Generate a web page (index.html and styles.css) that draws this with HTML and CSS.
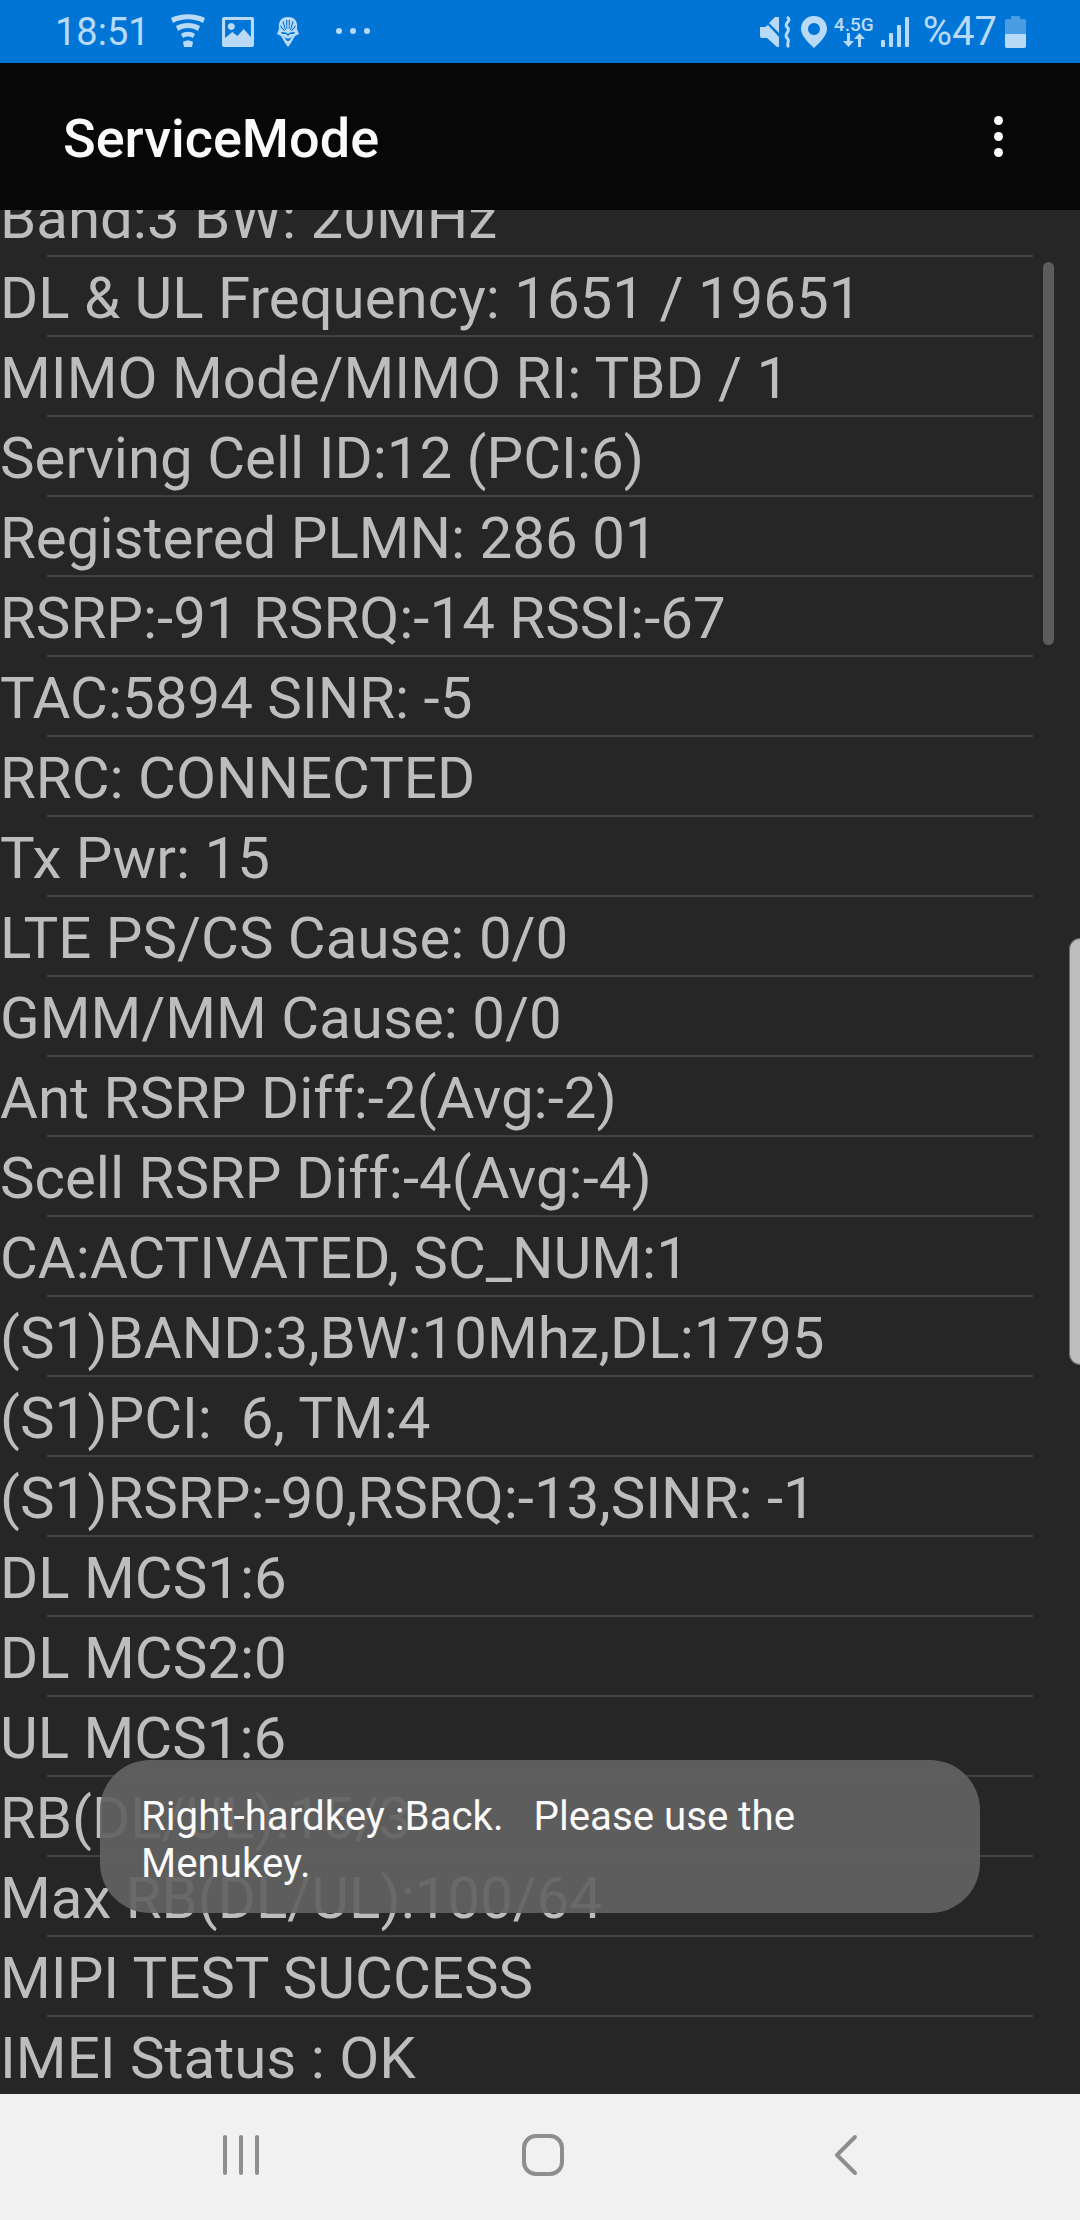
FILE: index.html
```html
<!DOCTYPE html>
<html lang="en">
<head>
    <meta charset="UTF-8">
    <title>ServiceMode</title>
    <link rel="stylesheet" href="styles.css">
</head>
<body>
    <div class="phone">
        <div class="status-bar">
            <div class="status-left">
                <span class="clock">18:51</span>
                <svg class="ic-wifi" width="34" height="36" viewBox="1 0 34 36">
                    <path d="M1 4C11 -1 25 -1 35 4L33 9C24 4 12 4 3 9Z M6 12C13 8 23 8 30 12L28 17C22 13 14 13 8 17Z M11 20C15 17 21 17 25 20L23 24C20 22 16 22 13 24Z M13 28C16 26 20 26 23 28L22 33H14Z"/>
                </svg>
                <svg class="ic-photo" width="32" height="30" viewBox="0 0 31 30" preserveAspectRatio="none">
                    <path fill-rule="evenodd" d="M2 0H29Q31 0 31 2V28Q31 30 29 30H2Q0 30 0 28V2Q0 0 2 0ZM3 3V21L10 15L15 19L21 12L28 20V3ZM9 6A3.500 3.500 0 1 0 9.010 6Z"/>
                </svg>
                <svg class="ic-mask" width="22" height="30" viewBox="0 0 22 30">
                    <path fill-rule="evenodd" d="M6 1Q11 -1 16 1Q21 4 20 12L22 17L18 19L14 26L11 30L8 26L4 19L0 17L2 12Q1 4 6 1ZM10.300 3H9L9.500 12H10.300ZM13 3H11.700V12H12.500ZM6.500 4L5.500 5L8 13L9 13ZM15.500 4L13 13L14 13L16.500 5ZM3.500 8V10L7 14L8 14ZM18.500 8L14 14L15 14L18.500 10ZM4 15L5 17H9L11 19L13 17H17L18 15L13 15.500L11 17L9 15.500ZM7 20L10 24H12L15 20L12 21.500H10Z"/>
                </svg>
                <div class="more-dots"><span></span><span></span><span></span></div>
            </div>
            <div class="status-right">
                <svg class="ic-mute" width="32" height="32" viewBox="0 0 32 32">
                    <path d="M0 11H5L8 9L19 21V31H17L7 22H2Q0 22 0 20Z"/>
                    <path d="M9 7L15 1H19V17Z"/>
                    <path class="wave" d="M27 1C33 5 23 7 27 11C32 15 23 18 27 22C31 25 25 28 29 31"/>
                </svg>
                <svg class="ic-pin" width="26" height="32" viewBox="0 0 26 32">
                    <path fill-rule="evenodd" d="M13 0C21 0 26 6 26 13C26 20 18 27 13 32C8 27 0 20 0 13C0 6 5 0 13 0ZM13 7A6 6 0 1 0 13.010 7Z"/>
                </svg>
                <div class="net-type">
                    <span class="net-label">4.5G</span>
                    <svg width="24" height="14" viewBox="0 0 24 14">
                        <path d="M5 0H8V8H12L6.500 14L1 8H5Z M16 14H19V6H23L17.500 0L12 6H16Z"/>
                    </svg>
                </div>
                <svg class="ic-signal" width="28" height="30" viewBox="0 0 28 30">
                    <rect x="0" y="23" width="4" height="7" rx="1"/>
                    <rect x="8" y="16" width="4" height="14" rx="1"/>
                    <rect x="16" y="8" width="4" height="22" rx="1"/>
                    <rect x="24" y="0" width="4" height="30" rx="1"/>
                </svg>
                <span class="battery-pct">%47</span>
                <div class="battery"><div class="battery-cap"></div><div class="battery-body"><div class="battery-level"></div></div></div>
            </div>
        </div>

        <div class="app-bar">
            <h1>ServiceMode</h1>
            <div class="menu-dots"><span></span><span></span><span></span></div>
        </div>

        <div class="content">
            <ul class="info-list">
                <li>Band:3 BW: 20MHz</li>
                <li>DL &amp; UL Frequency: 1651 / 19651</li>
                <li>MIMO Mode/MIMO RI: TBD / 1</li>
                <li>Serving Cell ID:12 (PCI:6)</li>
                <li>Registered PLMN: 286 01</li>
                <li>RSRP:-91 RSRQ:-14 RSSI:-67</li>
                <li>TAC:5894 SINR: -5</li>
                <li>RRC: CONNECTED</li>
                <li>Tx Pwr: 15</li>
                <li>LTE PS/CS Cause: 0/0</li>
                <li>GMM/MM Cause: 0/0</li>
                <li>Ant RSRP Diff:-2(Avg:-2)</li>
                <li>Scell RSRP Diff:-4(Avg:-4)</li>
                <li>CA:ACTIVATED, SC_NUM:1</li>
                <li>(S1)BAND:3,BW:10Mhz,DL:1795</li>
                <li>(S1)PCI:&nbsp; 6, TM:4</li>
                <li>(S1)RSRP:-90,RSRQ:-13,SINR: -1</li>
                <li>DL MCS1:6</li>
                <li>DL MCS2:0</li>
                <li>UL MCS1:6</li>
                <li>RB(DL/UL):15/3</li>
                <li>Max RB(DL/UL):100/64</li>
                <li>MIPI TEST SUCCESS</li>
                <li>IMEI Status : OK</li>
            </ul>
            <div class="scrollbar"></div>
            <div class="edge-handle"></div>
            <div class="toast">Right-hardkey :Back.&nbsp;&nbsp; Please use the Menukey.</div>
        </div>

        <div class="nav-bar">
            <svg class="nav-recents" width="38" height="42" viewBox="0 0 38 42">
                <path d="M3 3V39M19 3V39M35 3V39"/>
            </svg>
            <svg class="nav-home" width="42" height="42" viewBox="0 0 42 42">
                <rect x="2" y="2" width="38" height="38" rx="12"/>
            </svg>
            <svg class="nav-back" width="24" height="42" viewBox="0 0 24 42">
                <path d="M21 3L3 21L21 39"/>
            </svg>
        </div>
    </div>
</body>
</html>
```

FILE: styles.css
```css
* {
    box-sizing: border-box;
}

body {
    margin: 0;
    background-color: #262626;
    font-family: Roboto, sans-serif;
}

.phone {
    width: 1080px;
    height: 2220px;
    display: flex;
    flex-direction: column;
    overflow: hidden;
}

/* Status bar */
.status-bar {
    height: 63px;
    flex: none;
    background-color: #0075d6;
    color: #b9daf7;
    fill: #b9daf7;
    display: flex;
    justify-content: space-between;
    align-items: center;
    padding: 0 54px 0 55px;
}

.status-left,
.status-right {
    display: flex;
    align-items: center;
}

.clock {
    font-size: 38px;
    width: 116px;
}

.ic-photo {
    margin-left: 17px;
}

.ic-mask {
    margin-left: 23px;
}

.more-dots {
    display: flex;
    gap: 8px;
    margin: 0 0 2px 37px;
}

.more-dots span {
    width: 6px;
    height: 6px;
    border-radius: 50%;
    background-color: #b9daf7;
}

.ic-mute path.wave {
    stroke: #b9daf7;
    stroke-width: 3;
    fill: none;
}

.ic-pin {
    margin-left: 9px;
}

.net-type {
    display: flex;
    flex-direction: column;
    align-items: center;
    margin-left: 10px;
    width: 34px;
}

.net-label {
    font-size: 19px;
    line-height: 17px;
    font-weight: 500;
    white-space: nowrap;
}

.ic-signal {
    margin-left: 10px;
}

.battery-pct {
    font-size: 40px;
    margin-left: 14px;
}

.battery {
    margin-left: 8px;
    width: 21px;
    display: flex;
    flex-direction: column;
    align-items: center;
}

.battery-cap {
    width: 9px;
    height: 3px;
    background-color: #4a9de3;
    border-radius: 1px 1px 0 0;
}

.battery-body {
    width: 21px;
    height: 29px;
    background-color: #4a9de3;
    border-radius: 2px;
    display: flex;
    align-items: flex-end;
    overflow: hidden;
}

.battery-level {
    width: 100%;
    height: 47%;
    background-color: #b9daf7;
}

/* App bar */
.app-bar {
    height: 147px;
    flex: none;
    background-color: #070707;
    display: flex;
    justify-content: space-between;
    align-items: center;
    padding: 0 77px 0 63px;
    position: relative;
    z-index: 1;
}

.app-bar h1 {
    margin: 4px 0 0 0;
    font-size: 54px;
    font-weight: 500;
    color: #fafafa;
}

.menu-dots {
    display: flex;
    flex-direction: column;
    gap: 7px;
}

.menu-dots span {
    width: 9px;
    height: 9px;
    border-radius: 50%;
    background-color: #fafafa;
}

/* List */
.content {
    flex: 1;
    position: relative;
    overflow: hidden;
}

.info-list {
    list-style: none;
    margin: -33px 0 0 0;
    padding: 0;
}

.info-list li {
    height: 80px;
    line-height: 83px;
    font-size: 58.2px;
    color: #bdbdbd;
    white-space: nowrap;
    position: relative;
}

.info-list li::after {
    content: "";
    position: absolute;
    left: 47px;
    right: 47px;
    bottom: 0;
    height: 2px;
    background-color: #414141;
}

.scrollbar {
    position: absolute;
    left: 1043px;
    top: 52px;
    width: 11px;
    height: 383px;
    border-radius: 6px;
    background-color: #5c5c5c;
}

.edge-handle {
    position: absolute;
    right: 0;
    top: 728px;
    width: 11px;
    height: 427px;
    border-radius: 12px 0 0 12px;
    background-color: #bdbdbd;
    border: 1px solid #6e6e6e;
    border-right: none;
}

.toast {
    position: absolute;
    left: 100px;
    top: 1550px;
    width: 880px;
    height: 153px;
    padding: 33px 41px 0;
    border-radius: 50px;
    background-color: rgba(98, 98, 98, 0.93);
    color: #fafafa;
    font-size: 40.25px;
    line-height: 47px;
}

/* Navigation bar */
.nav-bar {
    height: 126px;
    flex: none;
    background-color: #f1f1f1;
    display: flex;
    align-items: center;
    position: relative;
    z-index: 1;
    padding: 0 0 4px 222px;
}

.nav-home {
    margin-left: 262px;
}

.nav-back {
    margin-left: 270px;
}

.nav-bar svg {
    fill: none;
    stroke: #8e8e8e;
    stroke-width: 4;
    stroke-linecap: round;
    stroke-linejoin: round;
}
```
